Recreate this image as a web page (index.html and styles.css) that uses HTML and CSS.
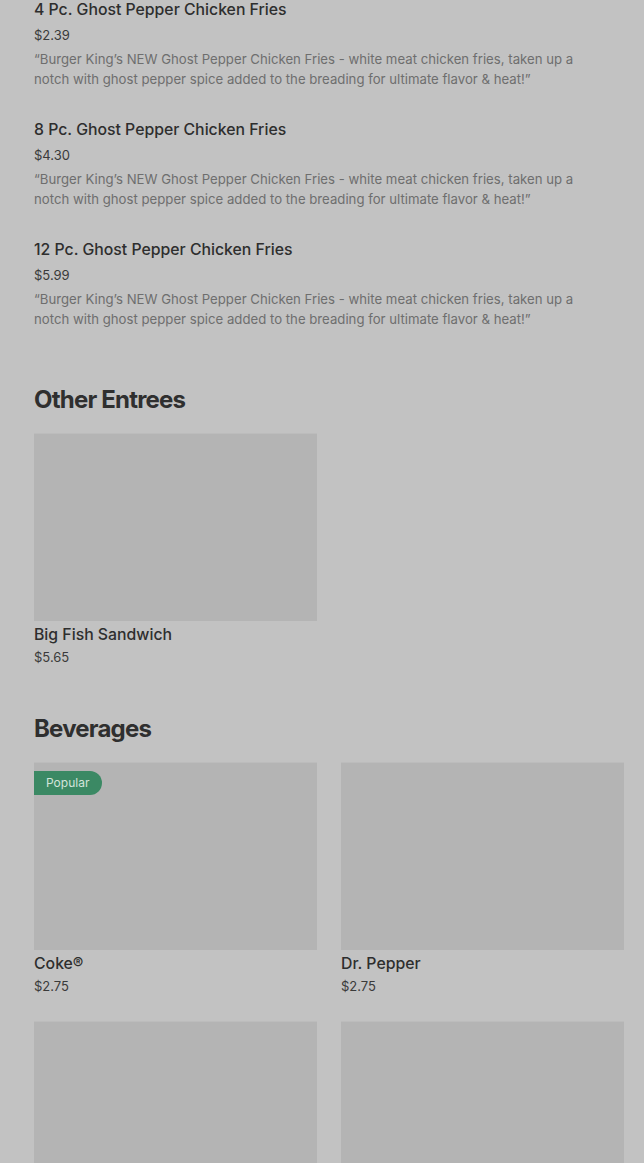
FILE: index.html
```html
<!DOCTYPE html>
<html>
<head>
<meta charset="utf-8">
<link rel="stylesheet" href="styles.css">
</head>
<body>
<div class="page">
  <div class="list">
    <div class="item">
      <div class="item-title">4 Pc. Ghost Pepper Chicken Fries</div>
      <div class="item-price">$2.39</div>
      <div class="item-desc">“Burger King’s NEW Ghost Pepper Chicken Fries - white meat chicken fries, taken up a notch with ghost pepper spice added to the breading for ultimate flavor &amp; heat!”</div>
    </div>
    <div class="item">
      <div class="item-title">8 Pc. Ghost Pepper Chicken Fries</div>
      <div class="item-price">$4.30</div>
      <div class="item-desc">“Burger King’s NEW Ghost Pepper Chicken Fries - white meat chicken fries, taken up a notch with ghost pepper spice added to the breading for ultimate flavor &amp; heat!”</div>
    </div>
    <div class="item">
      <div class="item-title">12 Pc. Ghost Pepper Chicken Fries</div>
      <div class="item-price">$5.99</div>
      <div class="item-desc">“Burger King’s NEW Ghost Pepper Chicken Fries - white meat chicken fries, taken up a notch with ghost pepper spice added to the breading for ultimate flavor &amp; heat!”</div>
    </div>
  </div>

  <section class="section">
    <h2 class="section-title">Other Entrees</h2>
    <div class="grid">
      <div class="card">
        <div class="card-img"></div>
        <div class="card-title">Big Fish Sandwich</div>
        <div class="card-price">$5.65</div>
      </div>
    </div>
  </section>

  <section class="section">
    <h2 class="section-title">Beverages</h2>
    <div class="grid">
      <div class="card">
        <div class="card-img"><span class="badge">Popular</span></div>
        <div class="card-title">Coke®</div>
        <div class="card-price">$2.75</div>
      </div>
      <div class="card">
        <div class="card-img"></div>
        <div class="card-title">Dr. Pepper</div>
        <div class="card-price">$2.75</div>
      </div>
      <div class="card">
        <div class="card-img"></div>
      </div>
      <div class="card">
        <div class="card-img"></div>
      </div>
    </div>
  </section>
</div>
</body>
</html>
```

FILE: styles.css
```css
html, body {
  margin: 0;
  padding: 0;
  background: #c2c2c2;
  overflow: hidden;
}
body {
  font-family: Inter, "Noto Sans", "Liberation Sans", sans-serif;
  color: #2f2f2f;
}
.page {
  padding: 0 20px 0 34px;
}
.item {
  padding-bottom: 31px;
}
.item-title {
  font-size: 15.8px;
  line-height: 20px;
  font-weight: 500;
  color: #2e2e2e;
}
.item-price {
  margin-top: 5px;
  font-size: 13px;
  line-height: 20px;
  color: #3a3a3a;
}
.item-desc {
  margin-top: 4px;
  font-size: 13.2px;
  line-height: 20px;
  color: #6e6e6e;
  padding-right: 40px;
}
.section {
  margin-top: 24px;
}
.section + .section {
  margin-top: 46px;
}
.section-title {
  margin: 0 0 17px;
  font-size: 24px;
  line-height: 32px;
  font-weight: 700;
  letter-spacing: -0.8px;
  color: #2f2f2f;
}
.grid {
  display: grid;
  grid-template-columns: 283px 283px;
  column-gap: 24px;
  row-gap: 25px;
}
.card-img {
  position: relative;
  height: 188px;
  background: #b4b4b4;
  border-top: 1px solid #bcbcbc;
  box-sizing: border-box;
}
.card-title {
  margin-top: 4px;
  font-size: 15.8px;
  line-height: 20px;
  font-weight: 500;
  color: #2e2e2e;
}
.card-price {
  margin-top: 2px;
  font-size: 13px;
  line-height: 20px;
  color: #3a3a3a;
}
.badge {
  position: absolute;
  left: 0;
  top: 8px;
  height: 24px;
  line-height: 24px;
  padding: 0 13px 0 12px;
  background: #3b8964;
  color: #d3e4db;
  font-size: 12px;
  border-radius: 0 12px 12px 0;
}
```
